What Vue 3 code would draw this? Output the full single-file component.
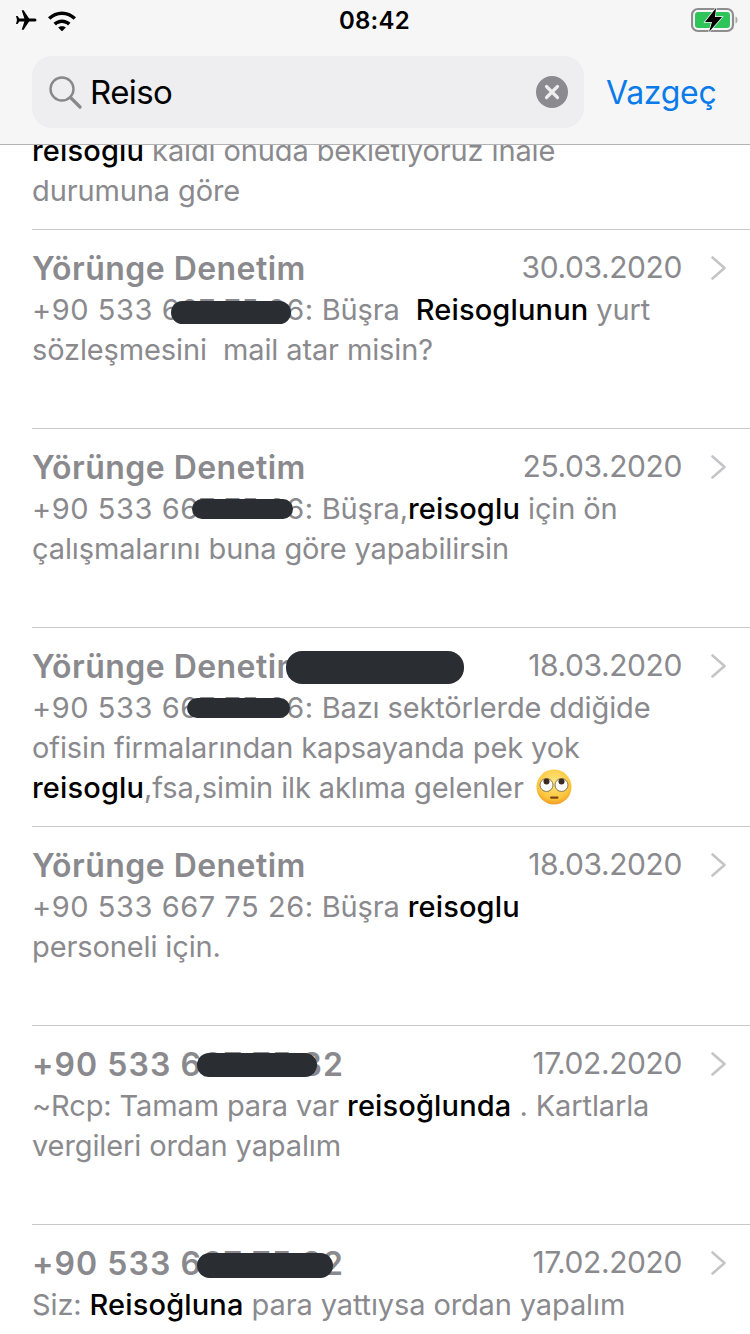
<template>
  <div class="phone">
    <header class="top">
      <div class="status">
        <div class="status-left">
          <svg class="plane" viewBox="0 0 22 22" width="22" height="22">
            <path d="M21.5 11c0-1-1-1.6-2.2-1.6h-5.2L8.6 1.2H6.7l2.7 8.2H4.3L2.6 7H1l1 4-1 4h1.6l1.7-2.4h5.1l-2.7 8.2h1.9l5.5-8.2h5.2c1.2 0 2.2-.6 2.2-1.6z" fill="#000" />
          </svg>
          <svg class="wifi" viewBox="0 0 30 22" width="30" height="22">
            <path d="M1 8.2C4.8 4.6 9.7 2.4 15 2.4s10.2 2.2 14 5.8l-2.4 2.6C23.500 7.900 19.400 6.100 15 6.100S6.500 7.900 3.400 10.800z" fill="#000" />
            <path d="M6.500 13.800C8.800 11.700 11.800 10.400 15 10.400s6.200 1.300 8.500 3.400l-2.500 2.600c-1.600-1.400-3.700-2.300-6-2.300s-4.400.9-6 2.300z" fill="#000" />
            <path d="M11.200 18.600c1-.9 2.400-1.400 3.800-1.400s2.800.5 3.800 1.400L15 22.400z" fill="#000" />
          </svg>
        </div>
        <span class="clock">08:42</span>
        <svg class="battery" viewBox="0 0 48 26" width="48" height="26">
          <rect x="1" y="2" width="41" height="22" rx="6" fill="none" stroke="#8e8e90" stroke-width="2.200" />
          <rect x="4" y="5" width="35" height="16" rx="3" fill="#2fc45a" />
          <path d="M44.500 9.500c1.500.5 2 2 2 3.500s-.5 3-2 3.500z" fill="#a9a9ab" />
          <path d="M25 1 14 15h7l-3 10L31 10h-7z" fill="#000" stroke="#f6f6f6" stroke-width="1.500" paint-order="stroke" />
        </svg>
      </div>
      <div class="search-row">
        <div class="search-box">
          <svg class="lens" viewBox="0 0 34 34" width="34" height="34">
            <circle cx="14" cy="14" r="11.500" fill="none" stroke="#88888c" stroke-width="2.400" />
            <path d="M22.500 22.500 32 32" stroke="#88888c" stroke-width="3.200" stroke-linecap="round" />
          </svg>
          <span class="query">Reiso</span>
          <svg class="clear" viewBox="0 0 32 32" width="32" height="32">
            <circle cx="16" cy="16" r="16" fill="#8b8b8f" />
            <path d="M10.500 10.500l11 11M21.500 10.500l-11 11" stroke="#eeeef0" stroke-width="3.200" stroke-linecap="round" />
          </svg>
        </div>
        <span class="cancel">Vazgeç</span>
      </div>
    </header>

    <main class="list">
      <div class="partial">
        <div class="partial-inner">
          <div class="line">
            <b class="hit">reisoglu</b> kaldı onuda bekletiyoruz ihale
          </div>
          <div class="line">durumuna göre</div>
        </div>
      </div>

      <section class="row" v-for="row in rows" :key="row.id">
        <div class="row-head">
          <span class="name" :class="{ num: row.name.startsWith('+') }">{{ row.name }}</span>
          <span class="date">{{ row.date }}</span>
          <svg class="chevron" viewBox="0 0 15 24" width="15" height="24">
            <path d="M1.500 1.500 13.500 12 1.500 22.500" fill="none" stroke="#c5c5c8" stroke-width="2.600" stroke-linecap="round" stroke-linejoin="round" />
          </svg>
        </div>
        <div class="line" v-for="(line, i) in row.lines" :key="i">
          <template v-for="(part, j) in line" :key="j">
            <b v-if="part.hit" class="hit">{{ part.t }}</b>
            <span v-else-if="part.who" class="who">{{ part.t }}</span>
            <span v-else>{{ part.t }}</span>
          </template>
          <svg v-if="row.emoji && i === 2" class="emoji" viewBox="0 0 36 36" width="36" height="36">
            <defs>
              <radialGradient id="face" cx="50%" cy="35%" r="70%">
                <stop offset="0%" stop-color="#ffe680" />
                <stop offset="70%" stop-color="#fbc53c" />
                <stop offset="100%" stop-color="#ee8f1e" />
              </radialGradient>
            </defs>
            <circle cx="18" cy="18" r="17.500" fill="url(#face)" />
            <circle cx="10.500" cy="16" r="6.500" fill="#fff" stroke="#8a7a55" stroke-width="1" />
            <circle cx="25.500" cy="16" r="6.500" fill="#fff" stroke="#8a7a55" stroke-width="1" />
            <circle cx="10.500" cy="12.500" r="3" fill="#3b2a20" />
            <circle cx="25.500" cy="12.500" r="3" fill="#3b2a20" />
            <rect x="14" y="27.500" width="8.500" height="2.200" rx="1.100" fill="#7a4518" />
          </svg>
        </div>
        <i
          v-for="(b, k) in row.blobs"
          :key="k"
          class="blob"
          :style="{ left: b[0] + 'px', top: b[1] + 'px', width: b[2] + 'px', height: b[3] + 'px' }"
        ></i>
      </section>
    </main>
  </div>
</template>

<script setup>
const t = (s) => ({ t: s })
const h = (s) => ({ t: s, hit: true })
const w = (s) => ({ t: s, who: true })

const rows = [
  {
    id: 1,
    name: 'Yörünge Denetim',
    date: '30.03.2020',
    lines: [[w('+90 533 667 75 26:'), t(' Büşra \u00a0'), h('Reisoglunun'), t(' yurt')], [t('sözleşmesini \u00a0mail atar misin?')]],
    blobs: [[139, 71, 120, 23]],
  },
  {
    id: 2,
    name: 'Yörünge Denetim',
    date: '25.03.2020',
    lines: [[w('+90 533 667 75 26:'), t(' Büşra,'), h('reisoglu'), t(' için ön')], [t('çalışmalarını buna göre yapabilirsin')]],
    blobs: [[160, 70, 101, 20]],
  },
  {
    id: 3,
    name: 'Yörünge Denetim',
    date: '18.03.2020',
    lines: [
      [w('+90 533 667 75 26:'), t(' Bazı sektörlerde ddiğide')],
      [t('ofisin firmalarından kapsayanda pek yok')],
      [h('reisoglu'), t(',fsa,simin ilk aklıma gelenler ')],
    ],
    emoji: true,
    blobs: [[254, 23, 178, 33], [155, 70, 103, 20]],
  },
  {
    id: 4,
    name: 'Yörünge Denetim',
    date: '18.03.2020',
    lines: [[w('+90 533 667 75 26:'), t(' Büşra '), h('reisoglu')], [t('personeli için.')]],
    blobs: [],
  },
  {
    id: 5,
    name: '+90 533 667 75 32',
    date: '17.02.2020',
    lines: [[t('~Rcp: Tamam para var '), h('reisoğlunda'), t(' . Kartlarla')], [t('vergileri ordan yapalım')]],
    blobs: [[165, 27, 120, 24]],
  },
  {
    id: 6,
    name: '+90 533 667 75 32',
    date: '17.02.2020',
    lines: [[t('Siz: '), h('Reisoğluna'), t(' para yattıysa ordan yapalım')]],
    blobs: [[165, 28, 136, 25]],
  },
]
</script>

<style>
html, body { margin: 0; background: #fff; }
</style>

<style scoped>
.phone {
  width: 750px;
  height: 1334px;
  overflow: hidden;
  background: #fff;
  font-family: Inter, "Noto Sans", sans-serif;
  display: flex;
  flex-direction: column;
}
.top {
  height: 145px;
  flex: none;
  box-sizing: border-box;
  background: #f6f6f6;
  border-bottom: 1px solid #b4b4b6;
}
.status {
  height: 40px;
  padding: 0 11px 0 15px;
  display: flex;
  align-items: center;
  justify-content: space-between;
  position: relative;
}
.status-left { display: flex; align-items: center; gap: 10px; }
.clock {
  font-size: 24px;
  font-weight: 600;
  color: #000;
  letter-spacing: 0.2px;
  position: absolute;
  left: 339px;
}
.search-row {
  margin-top: 16px;
  padding: 0 32px;
  display: flex;
  align-items: center;
}
.search-box {
  width: 552px;
  height: 72px;
  flex: none;
  box-sizing: border-box;
  background: #eeeef0;
  border-radius: 20px;
  display: flex;
  align-items: center;
  padding: 0 16px;
}
.lens { flex: none; }
.query {
  flex: 1;
  margin-left: 8px;
  font-size: 33px;
  color: #000;
  letter-spacing: -0.6px;
}
.cancel {
  margin-left: 22px;
  font-size: 32px;
  color: #0a7bea;
  letter-spacing: -0.3px;
}
.list { flex: 1; min-height: 0; overflow: hidden; }
.partial {
  height: 84px;
  overflow: hidden;
  padding-left: 32px;
}
.partial-inner { margin-top: -14px; }
.row {
  position: relative;
  height: 199px;
  box-sizing: border-box;
  margin-left: 32px;
  border-top: 1px solid #c8c8cc;
  padding: 18px 24px 0 0;
}
.row-head {
  display: flex;
  align-items: center;
  height: 40px;
  margin-bottom: 2px;
}
.name {
  flex: 1;
  font-size: 32px;
  font-weight: 600;
  color: #8a8a8e;
  letter-spacing: 0.45px;
  white-space: nowrap;
}
.name.num { letter-spacing: 1.05px; }
.date {
  font-size: 30px;
  color: #8a8a8e;
  letter-spacing: -0.4px;
  margin-bottom: 2px;
}
.chevron { flex: none; margin-left: 29px; margin-bottom: 1px; }
.line {
  height: 40px;
  line-height: 40px;
  font-size: 29px;
  color: #8a8a8e;
  letter-spacing: -0.12px;
  white-space: nowrap;
}
.who { letter-spacing: 0.55px; }
.hit { font-weight: 500; color: #000; letter-spacing: 0.15px; }
.emoji { vertical-align: middle; margin: -6px 0 0 4px; }
.blob {
  position: absolute;
  background: #2a2e32;
  border-radius: 16px;
}
</style>
